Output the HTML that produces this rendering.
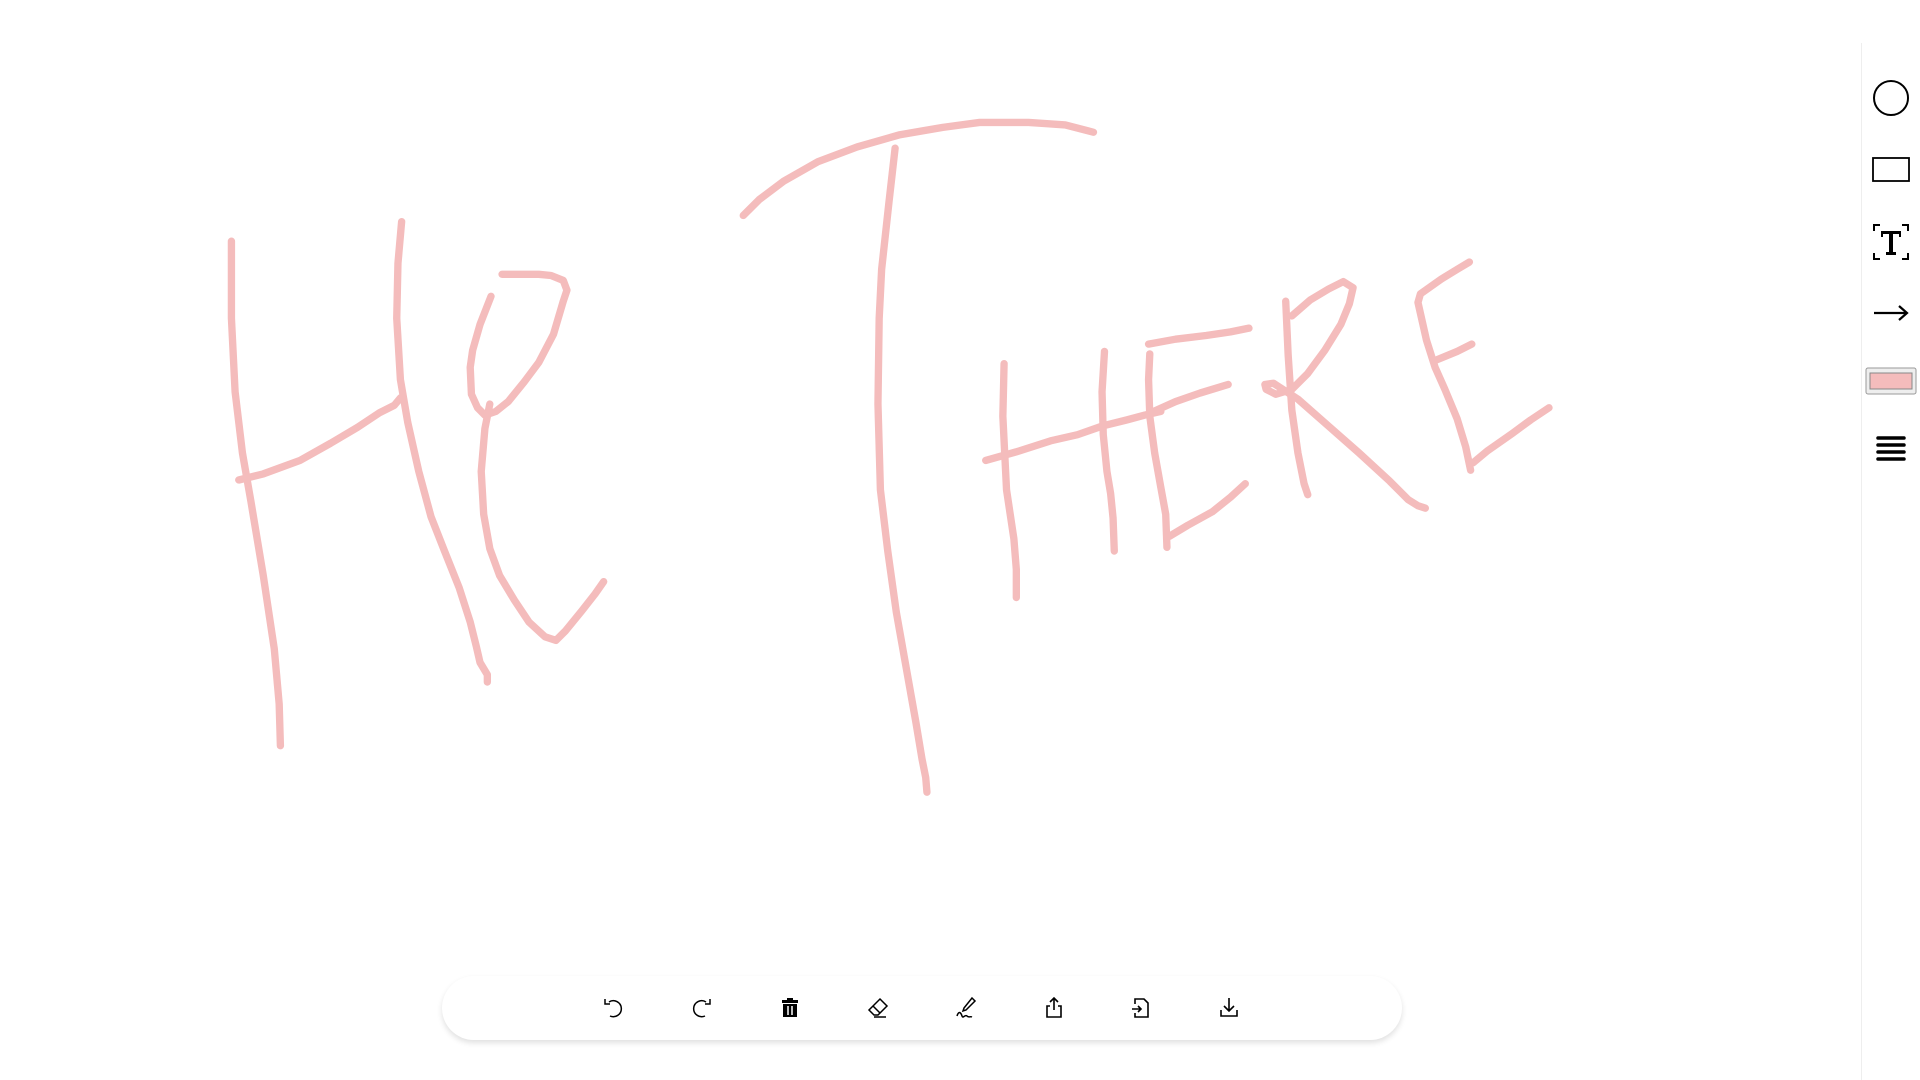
<!DOCTYPE html>
<html><head><meta charset="utf-8"><style>
html,body{margin:0;padding:0;width:1920px;height:1080px;background:#fff;overflow:hidden;font-family:"Liberation Sans",sans-serif}
.canvas{position:absolute;left:0;top:0}
.side{position:absolute;left:1861px;top:43px;width:59px;height:1037px;border-left:1px solid #eee;background:#fff}
.si{position:absolute;left:50%;transform:translate(-50%,-50%)}
.bar{position:absolute;left:442px;top:976px;width:960px;height:64px;border-radius:32px;background:#fff;box-shadow:0 3px 6px rgba(0,0,0,0.12)}
.ti{position:absolute;top:1008px;transform:translate(-50%,-50%)}
</style></head><body>
<svg class="canvas" width="1920" height="1080" viewBox="0 0 1568 882" fill="none" stroke="#f4bcbc" stroke-width="6" stroke-linecap="round" stroke-linejoin="round">
<path d="M189,197 L189,260 L192,320 L198,370 L205,410 L215,470 L224,530 L228,575 L229,609"/>
<path d="M195,392 L215,387 L245,376 L270,362 L292,349 L310,337 L322,331 L327,325"/>
<path d="M328,181 L325,215 L324,260 L327,310 L333,345 L342,385 L352,422 L363,450 L375,480 L384,508 L389,528 L392,541 L398,551 L398,557"/>
<path d="M401,242 L392,265 L386,286 L384,300 L385,322 L390,333 L396,339 L405,336 L415,328 L428,312 L440,296 L452,273 L460,246 L463,237 L460,229 L450,225 L440,224 L410,224"/>
<path d="M400,330 L396,350 L393,385 L395,420 L400,448 L408,470 L420,490 L432,508 L445,520 L454,523 L462,515 L475,499 L486,485 L493,475"/>
<path d="M607,176 L620,163 L640,148 L668,132 L700,120 L735,110 L770,104 L800,100 L840,100 L870,102 L893,108"/>
<path d="M731,121 L726,165 L720,220 L718,260 L717,330 L719,400 L725,450 L732,500 L740,545 L748,590 L753,620 L756,635 L757,647"/>
<path d="M820,297 L819,340 L822,400 L828,440 L830,465 L830,488"/>
<path d="M805,376 L830,369 L858,360 L880,355 L900,348 L920,343 L935,339 L948,336"/>
<path d="M902,287 L900,320 L901,355 L904,385 L907,403 L909,423 L910,450"/>
<path d="M938,281 L960,277 L985,274 L1005,271 L1020,268"/>
<path d="M939,289 L938,310 L939,340 L943,370 L948,398 L952,420 L953,447"/>
<path d="M940,337 L960,328 L980,321 L1003,314"/>
<path d="M955,438 L970,429 L990,418 L1005,406 L1017,395"/>
<path d="M1050,246 L1052,290 L1055,335 L1060,370 L1065,395 L1068,404"/>
<path d="M1055,258 L1070,245 L1085,236 L1097,230 L1105,235 L1102,248 L1095,265 L1082,286 L1068,305 L1055,318 L1042,322 L1034,318 L1033,314 L1040,313 L1060,326 L1085,348 L1110,370 L1135,393 L1150,408 L1158,413 L1164,415"/>
<path d="M1200,214 L1190,220 L1177,228 L1160,240 L1158,247 L1165,278 L1172,300 L1180,318 L1190,342 L1197,365 L1201,384"/>
<path d="M1173,294 L1190,287 L1202,281"/>
<path d="M1203,378 L1215,368 L1235,354 L1250,343 L1265,333"/>
</svg>

<div class="side"></div>
<svg class="si" style="left:1891px;top:98px;position:absolute" width="38" height="38"><circle cx="19" cy="19" r="17" fill="none" stroke="#000" stroke-width="2"/></svg>
<svg class="si" style="left:1891px;top:170px;position:absolute" width="38" height="26"><rect x="1" y="1" width="36" height="23" fill="none" stroke="#000" stroke-width="1.8"/></svg>
<svg class="si" style="left:1891px;top:242px;position:absolute" width="38" height="38"><path d="M8,2 H2 V8 M30,2 H36 V8 M2,30 V36 H8 M36,30 V36 H30" fill="none" stroke="#000" stroke-width="2"/><path d="M9,8 H29 V14 H27 V11 H21 V29 H24 V32 H14 V29 H17 V11 H11 V14 H9 Z" fill="#000"/></svg>
<svg class="si" style="left:1891px;top:313px;position:absolute" width="38" height="20"><path d="M2,10 H35 M27,3 L35,10 L27,17" fill="none" stroke="#000" stroke-width="2.2"/></svg>
<svg class="si" style="left:1891px;top:381px;position:absolute" width="52" height="28"><rect x="1" y="1" width="50" height="26" rx="2" fill="#eee" stroke="#999"/><rect x="5" y="6" width="42" height="16" fill="#f4bcbc" stroke="#888"/></svg>
<svg class="si" style="left:1891px;top:448px;position:absolute" width="30" height="30"><path d="M2,5 H28 M2,12 H28 M2,19 H28 M2,26 H28" stroke="#000" stroke-width="3.5" stroke-linecap="round"/></svg>

<div class="bar"></div>
<svg class="ti" style="left:613px" width="24" height="24" fill="none" stroke="#000" stroke-width="1.5"><path d="M8,6 A8,8 0 1 1 9,20"/><path d="M4,3 V8 H9"/></svg>
<svg class="ti" style="left:702px" width="24" height="24" fill="none" stroke="#000" stroke-width="1.5"><path d="M16,6 A8,8 0 1 0 15,20"/><path d="M20,3 V8 H15"/></svg>
<svg class="ti" style="left:790px" width="24" height="24"><path d="M9,2 H15 V4 H20 V7 H4 V4 H9 Z M5,8 H19 V21 H5 Z" fill="#000"/><path d="M10,10 V19 M14,10 V19" stroke="#fff" stroke-width="1.5"/></svg>
<svg class="ti" style="left:878px" width="24" height="24" fill="none" stroke="#000" stroke-width="1.5"><path d="M14,3 L21,10 L12,19 L8,19 L3,14 Z M7,10 L14,17 M8,21 H20"/></svg>
<svg class="ti" style="left:966px" width="24" height="24" fill="none" stroke="#000" stroke-width="1.5"><path d="M18,2 L21,5 L12,14 L9,15 L10,12 Z M3,20 C5,14 7,17 8,20 C9,23 11,18 13,20 C15,22 16,20 18,21"/></svg>
<svg class="ti" style="left:1054px" width="24" height="24" fill="none" stroke="#000" stroke-width="1.6"><path d="M12,2 V14 M8,6 L12,2 L16,6 M8,10 H5 V21 H19 V10 H16"/></svg>
<svg class="ti" style="left:1141px" width="24" height="24" fill="none" stroke="#000" stroke-width="1.6"><path d="M6,8 V3 H15 L19,7 V21 H6 V17 M3,13 H12 M9,10 L12,13 L9,16"/></svg>
<svg class="ti" style="left:1229px" width="24" height="24" fill="none" stroke="#000" stroke-width="1.6"><path d="M12,2 V15 M7,10 L12,15 L17,10 M4,14 V20 H20 V14"/></svg>
</body></html>
